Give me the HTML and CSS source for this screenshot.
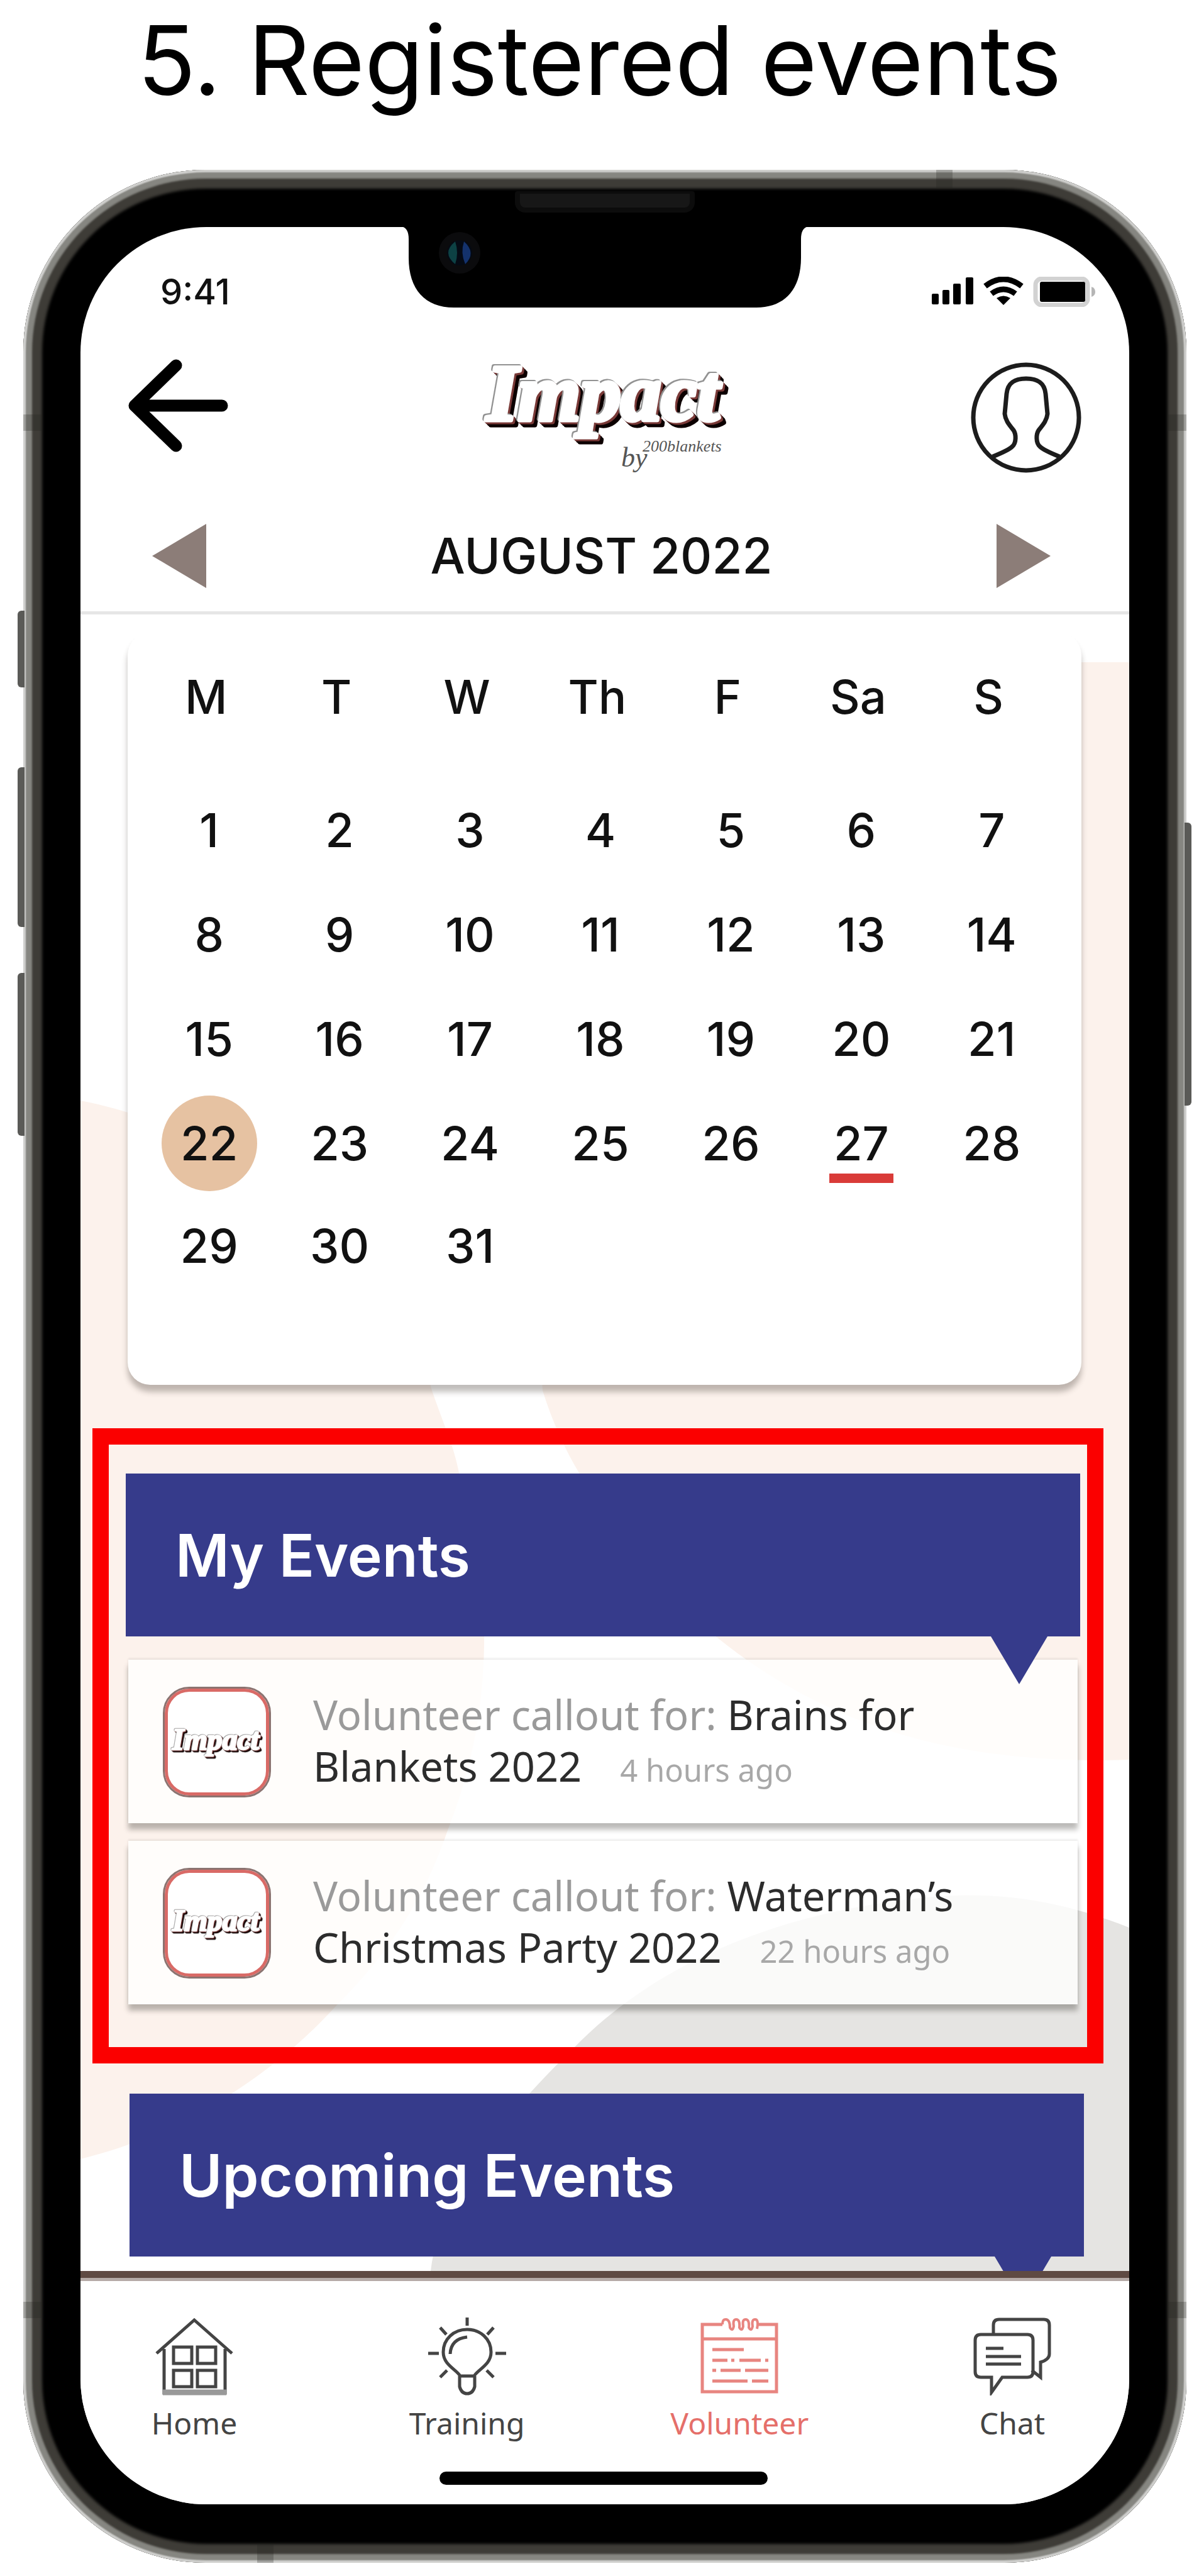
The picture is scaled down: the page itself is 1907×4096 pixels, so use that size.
FILE: index.html
```html
<!DOCTYPE html>
<html lang="en">
<head>
<meta charset="utf-8">
<title>Registered events</title>
<link rel="stylesheet" href="styles.css">
</head>
<body>
<h1 class="page-title">5. Registered events</h1>
<main class="phone">
  <span class="key key-mute"></span>
  <span class="key key-up"></span>
  <span class="key key-down"></span>
  <span class="key key-power"></span>
  <span class="band band-top-left"></span>
  <span class="band band-top-right"></span>
  <span class="band band-bottom-left"></span>
  <span class="band band-bottom-right"></span>
  <span class="band-v band-v-top"></span>
  <span class="band-v band-v-bottom"></span>
  <span class="speaker"></span>
  <svg class="notch" viewBox="0 0 648 130" aria-hidden="true">
    <path d="M0 0H648Q636 2 636 20V50C636 100 610 129 565 129H84C38 129 12 100 12 50V20Q12 2 0 0Z"/>
    <circle cx="93" cy="42" r="33" fill="#0b0b0d"/>
    <circle cx="93" cy="42" r="20" fill="#050a14"/>
    <path d="M86 24Q64 42 86 60Q92 42 86 24Z" fill="#0d4144"/>
    <path d="M100 24Q120 42 102 60Q94 42 100 24Z" fill="#14326c"/>
  </svg>
  <div class="screen">
    <div class="status">
      <time>9:41</time>
      <svg width="264" height="48" viewBox="0 0 264 48" aria-hidden="true">
        <g><rect x="4" y="27" width="11" height="17" rx="2"/><rect x="21" y="21" width="11" height="23" rx="2"/><rect x="38" y="11" width="12" height="33" rx="2"/><rect x="58" y="1" width="12" height="43" rx="2"/></g>
        <g fill="none" stroke="#000" stroke-width="9"><path d="M89 15Q118-7 147 15"/><path d="M99 27Q118 13 137 27"/></g>
        <path d="M118 45L107 34Q118 27 129 34Z"/>
        <rect x="169" y="3" width="83" height="42" rx="10" fill="#fff" stroke="#d2d2d2" stroke-width="7"/>
        <rect x="176" y="8" width="72" height="32" rx="3"/>
        <path d="M258 16Q264 18 264 24T258 32Z" fill="#b5b5b5"/>
      </svg>
    </div>
    <header class="app-header">
      <button class="icon-button" aria-label="Back">
        <svg width="180" height="200" viewBox="0 0 180 200"><path d="M77 17L11 81L77 145M11 81H150" fill="none" stroke="#000" stroke-width="19" stroke-linecap="round" stroke-linejoin="round"/></svg>
      </button>
      <svg class="logo" width="400" height="200" viewBox="0 0 400 200" role="img" aria-label="Impact by 200blankets">
        <text class="wordmark" x="12" y="104">Impact</text>
        <text class="logo-by" x="226" y="178">by</text>
        <text class="logo-brand" x="260" y="154">200blankets</text>
      </svg>
      <button class="icon-button" aria-label="Profile">
        <svg width="180" height="200" viewBox="0 0 180 200" fill="none" stroke="#1c1c1c" stroke-width="7"><circle cx="92" cy="100" r="84"/><path d="M39 162Q64 152 70 146C77 140 76 126 72 120C64 110 59 104 58 94L61 62C63 43 76 38 92 38S121 43 123 62L126 94C125 104 120 110 112 120C108 126 107 140 114 146Q120 152 145 162"/></svg>
      </button>
    </header>
    <nav class="month">
      <button class="icon-button" aria-label="Previous month"><svg width="86" height="102" viewBox="0 0 86 102"><path d="M0 51L86 0V102Z"/></svg></button>
      <h2>AUGUST 2022</h2>
      <button class="icon-button" aria-label="Next month"><svg width="86" height="102" viewBox="0 0 86 102"><path d="M86 51L0 0V102Z"/></svg></button>
    </nav>
    <div class="content">
      <svg class="blobs" viewBox="0 0 1668 2634" preserveAspectRatio="none" aria-hidden="true">
        <g fill="#fcf2ec">
          <path d="M0 773C240 820 500 1000 559 1234C582 1300 593 1320 602 1365C627 1440 642 1540 642 1627C642 1730 625 1830 583 1936C545 2050 480 2140 407 2212C300 2330 150 2420 0 2456Z"/>
          <path d="M1668 76H1400C1000 120 700 700 735 1234Q757 1305 793 1365C850 1480 930 1560 1013 1627C1190 1770 1400 1830 1668 1821Z"/>
        </g>
        <path d="M1668 2088C1560 2045 1460 2030 1356 2039C1120 2060 920 2140 784 2280C660 2400 570 2520 557 2634H1668Z" fill="#e5e4e2"/>
      </svg>
      <section class="calendar">
        <table>
          <thead><tr><th scope="col">M</th><th scope="col">T</th><th scope="col">W</th><th scope="col">Th</th><th scope="col">F</th><th scope="col">Sa</th><th scope="col">S</th></tr></thead>
          <tbody>
            <tr><td>1</td><td>2</td><td>3</td><td>4</td><td>5</td><td>6</td><td>7</td></tr>
            <tr><td>8</td><td>9</td><td>10</td><td>11</td><td>12</td><td>13</td><td>14</td></tr>
            <tr><td>15</td><td>16</td><td>17</td><td>18</td><td>19</td><td>20</td><td>21</td></tr>
            <tr><td><span class="today">22</span></td><td>23</td><td>24</td><td>25</td><td>26</td><td><span class="marked">27</span></td><td>28</td></tr>
            <tr><td>29</td><td>30</td><td>31</td><td></td><td></td><td></td><td></td></tr>
          </tbody>
        </table>
      </section>
      <section class="highlight">
        <h2 class="banner">My Events</h2>
        <ul class="events">
          <li class="event">
            <span class="badge"><svg width="150" height="56" viewBox="0 0 400 150" aria-hidden="true"><text class="wordmark" x="10" y="108">Impact</text></svg></span>
            <p>Volunteer callout for: <a href="#brains">Brains for Blankets 2022</a> <time>4 hours ago</time></p>
          </li>
          <li class="event">
            <span class="badge"><svg width="150" height="56" viewBox="0 0 400 150" aria-hidden="true"><text class="wordmark" x="10" y="108">Impact</text></svg></span>
            <p>Volunteer callout for: <a href="#waterman">Waterman’s Christmas Party 2022</a> <time>22 hours ago</time></p>
          </li>
        </ul>
      </section>
      <section class="upcoming">
        <h2 class="banner">Upcoming Events</h2>
      </section>
    </div>
    <nav class="tabbar">
      <div class="tabs">
        <a class="tab" href="#home">
          <svg width="124" height="124" viewBox="0 0 124 124"><path d="M2 57L62 4L122 57M14 50V120H111V50"/><path d="M29 47H58V73H29ZM67 47H96V73H67ZM29 84H58V110H29ZM67 84H96V110H67Z"/><path d="M12 119H113" stroke="#999" stroke-width="9"/></svg>
          Home</a>
        <a class="tab" href="#training">
          <svg width="124" height="124" viewBox="0 0 124 124"><path d="M51 93C44 82 24 75 24 55C24 34 41 19 62 19S100 34 100 55C100 75 80 82 73 93Z"/><path d="M50 93V110Q53 121 62 121T74 110V93"/><path d="M35 58Q36 34 62 31M62 0V13M19 16L29 27M104 16L94 27M0 57H17M107 57H124M19 95L30 84M104 95L93 84"/></svg>
          Training</a>
        <a class="tab tab-active" href="#volunteer" aria-current="page">
          <svg width="124" height="124" viewBox="0 0 124 124"><path d="M35 11H3V118H121V11H90M3 34H121"/><path stroke-width="4" d="M35 11Q35 2 41 3T47 16Q51 23 53 14Q51 3 57 3T62 16Q66 23 68 14Q66 3 72 3T77 16Q81 23 83 14Q81 3 87 3T90 18"/><path d="M19 51H69M19 68H43M49 68H54M62 68H96M103 68H108M19 84H25M32 84H64M71 84H108M19 101H75M82 101H108"/></svg>
          Volunteer</a>
        <a class="tab" href="#chat">
          <svg width="124" height="124" viewBox="0 0 124 124"><path d="M32 26V12Q32 3 41 3H112Q121 3 121 12V58Q121 67 107 71V95L93 84"/><path d="M12 27H86Q95 27 95 36V86Q95 95 86 95H46L29 119V95H12Q3 95 3 86V36Q3 27 12 27Z"/><path d="M20 49H48M20 62H76M20 74H76"/></svg>
          Chat</a>
      </div>
      <span class="home-indicator"></span>
    </nav>
  </div>
</main>
</body>
</html>
```
FILE: styles.css
```css
* { box-sizing: border-box; }

body {
  margin: 0;
  background: #fff;
  color: #111;
  font-family: Inter, "Liberation Sans", sans-serif;
}

h1, h2, p, ul { margin: 0; padding: 0; font-weight: 500; }
ul { list-style: none; }
a { color: inherit; text-decoration: none; }
svg { display: block; flex: none; }

.page-title {
  padding-top: 4px;
  font-size: 153px;
  font-weight: 400;
  line-height: 184px;
  text-align: center;
  color: #000;
}

/* Phone body */
.phone {
  position: relative;
  margin: 82px 20px 20px 37px;
  padding: 91px 91px 93px;
  border-radius: 290px;
  background: #000;
  box-shadow: inset 0 0 2px 4px #d0d0ce, inset 0 0 3px 14px #868681, inset 0 0 4px 30px #3e3c37;
}

.key {
  position: absolute;
  left: -9px;
  width: 11px;
  border-radius: 6px 0 0 6px;
  background: #5a5a57;
}
.key-mute { top: 701px; height: 122px; }
.key-up { top: 950px; height: 254px; }
.key-down { top: 1277px; height: 259px; }
.key-power { top: 1038px; height: 450px; left: auto; right: -8px; border-radius: 0 6px 6px 0; }

.band { position: absolute; width: 30px; height: 26px; background: rgba(30, 30, 28, .25); }
.band-top-left { left: 0; top: 389px; }
.band-top-right { right: 0; top: 389px; }
.band-bottom-left { left: 0; bottom: 389px; }
.band-bottom-right { right: 0; bottom: 389px; }
.band-v { position: absolute; width: 26px; height: 30px; background: rgba(30, 30, 28, .25); }
.band-v-top { right: 372px; top: 0; }
.band-v-bottom { left: 372px; bottom: 0; }

.speaker {
  position: absolute;
  top: 34px;
  left: 50%;
  width: 286px;
  height: 34px;
  margin-left: -143px;
  border: 8px solid #0c0c0c;
  border-top-width: 4px;
  border-radius: 4px 4px 16px 16px;
  background: #171717;
}

.notch {
  position: absolute;
  z-index: 2;
  top: 90px;
  left: 50%;
  width: 648px;
  margin-left: -324px;
}

.screen {
  position: relative;
  display: flex;
  flex-direction: column;
  overflow: hidden;
  border-radius: 200px;
  background: #fff;
}

.status {
  display: flex;
  align-items: center;
  justify-content: space-between;
  padding: 68px 54px 0 127px;
  font-size: 56px;
  font-weight: 500;
  line-height: 70px;
}

.icon-button { padding: 0; border: 0; background: none; }

.app-header {
  display: grid;
  grid-template-columns: 180px 1fr 180px;
  justify-items: center;
  padding: 65px 76px 0 75px;
}

.logo { overflow: visible; }
.wordmark {
  fill: #fff;
  stroke: #fff;
  stroke-width: 7px;
  stroke-linejoin: round;
  font: italic bold 128px "Liberation Serif", serif;
  filter: drop-shadow(-2px -2px 0 #929292) drop-shadow(3px 3px 0 #7a3a38) drop-shadow(5px 5px 0 #0c0000);
}
.logo-by { font: italic 44px "Liberation Serif", serif; fill: #555; }
.logo-brand { font: italic 26px "Liberation Serif", serif; fill: #555; }

.month {
  display: flex;
  align-items: center;
  justify-content: space-between;
  padding: 66px 125px 34px 114px;
  border-bottom: 5px solid #e6e6e6;
}
.month h2 { font-size: 78px; line-height: 108px; }
.month svg { fill: #8c7d78; }

.content { position: relative; padding: 29px 0 23px; }
.blobs { position: absolute; inset: 0; width: 100%; height: 100%; }

.calendar {
  position: relative;
  margin: 0 76px 0 75px;
  padding: 19px 39px 135px 26px;
  border-radius: 36px;
  background: #fff;
  box-shadow: 0 11px 10px rgba(60, 50, 45, .32);
}
.calendar table { width: 100%; table-layout: fixed; border-collapse: collapse; }
.calendar th, .calendar td {
  padding: 0;
  height: 166px;
  font-size: 74px;
  font-weight: 500;
  line-height: 90px;
  text-align: center;
}
.calendar th { height: 212px; padding: 0 10px 46px 0; }
.calendar tr:last-child td { padding-bottom: 6px; }
.today {
  display: block;
  width: 152px;
  margin: 0 auto;
  border-radius: 50%;
  background: #e6c2a2;
  line-height: 152px;
}
.marked { position: relative; }
.marked::after {
  content: "";
  position: absolute;
  left: 50%;
  bottom: -18px;
  width: 102px;
  height: 15px;
  margin-left: -51px;
  background: #d93b38;
}

.highlight {
  position: relative;
  margin: 69px 41px 0 19px;
  padding: 46px 11px 68px 27px;
  border: 26px solid #fb0000;
}

.banner {
  position: relative;
  z-index: 1;
  padding: 2px 79px 0;
  background: #363b8b;
  color: #fff;
  font-size: 93px;
  font-weight: 600;
  line-height: 257px;
}
.banner::after {
  content: "";
  position: absolute;
  top: 100%;
  right: 52px;
  width: 90px;
  height: 76px;
  background: #363b8b;
  clip-path: polygon(0 0, 100% 0, 50% 100%);
}

.events { display: grid; gap: 28px; margin: 37px 4px 0; }
.event {
  display: flex;
  align-items: center;
  gap: 67px;
  min-height: 260px;
  padding: 2px 120px 0 55px;
  background: rgba(255, 255, 255, .8);
  box-shadow: 0 10px 8px rgba(50, 45, 40, .33), 0 -2px 3px rgba(50, 45, 40, .1);
}
.event p {
  color: #9a9a9a;
  font-family: "Noto Sans", sans-serif;
  font-size: 65px;
  font-weight: 400;
  line-height: 82px;
}
.event a { color: #2c2c2c; }
.event time { margin-left: 44px; color: #a8a8a8; font-size: 49px; }

.badge {
  display: grid;
  place-items: center;
  flex: none;
  width: 172px;
  height: 176px;
  border: 3px solid #8b7370;
  border-radius: 42px;
  background: #fff;
  box-shadow: inset 0 0 0 5px #d96a66;
}

.upcoming { position: relative; margin: 48px 72px 0 78px; }

.tabbar {
  position: relative;
  z-index: 2;
  padding: 63px 66px 31px 61px;
  border-top: 11px solid #5f4a43;
  background: #fff;
  box-shadow: inset 0 5px #b5aaa7;
}
.tabs { display: flex; justify-content: space-between; }
.tab {
  display: flex;
  flex-direction: column;
  align-items: center;
  gap: 12px;
  width: 240px;
  color: #444;
  font-family: "Noto Sans", sans-serif;
  font-size: 48px;
  line-height: 64px;
}
.tab svg { fill: none; stroke: #444; stroke-width: 5px; }
.tab-active { color: #e56f6a; }
.tab-active svg { stroke: #e88580; }
.home-indicator {
  display: block;
  width: 522px;
  height: 21px;
  margin: 45px auto 0;
  border-radius: 11px;
  background: #000;
}
```
